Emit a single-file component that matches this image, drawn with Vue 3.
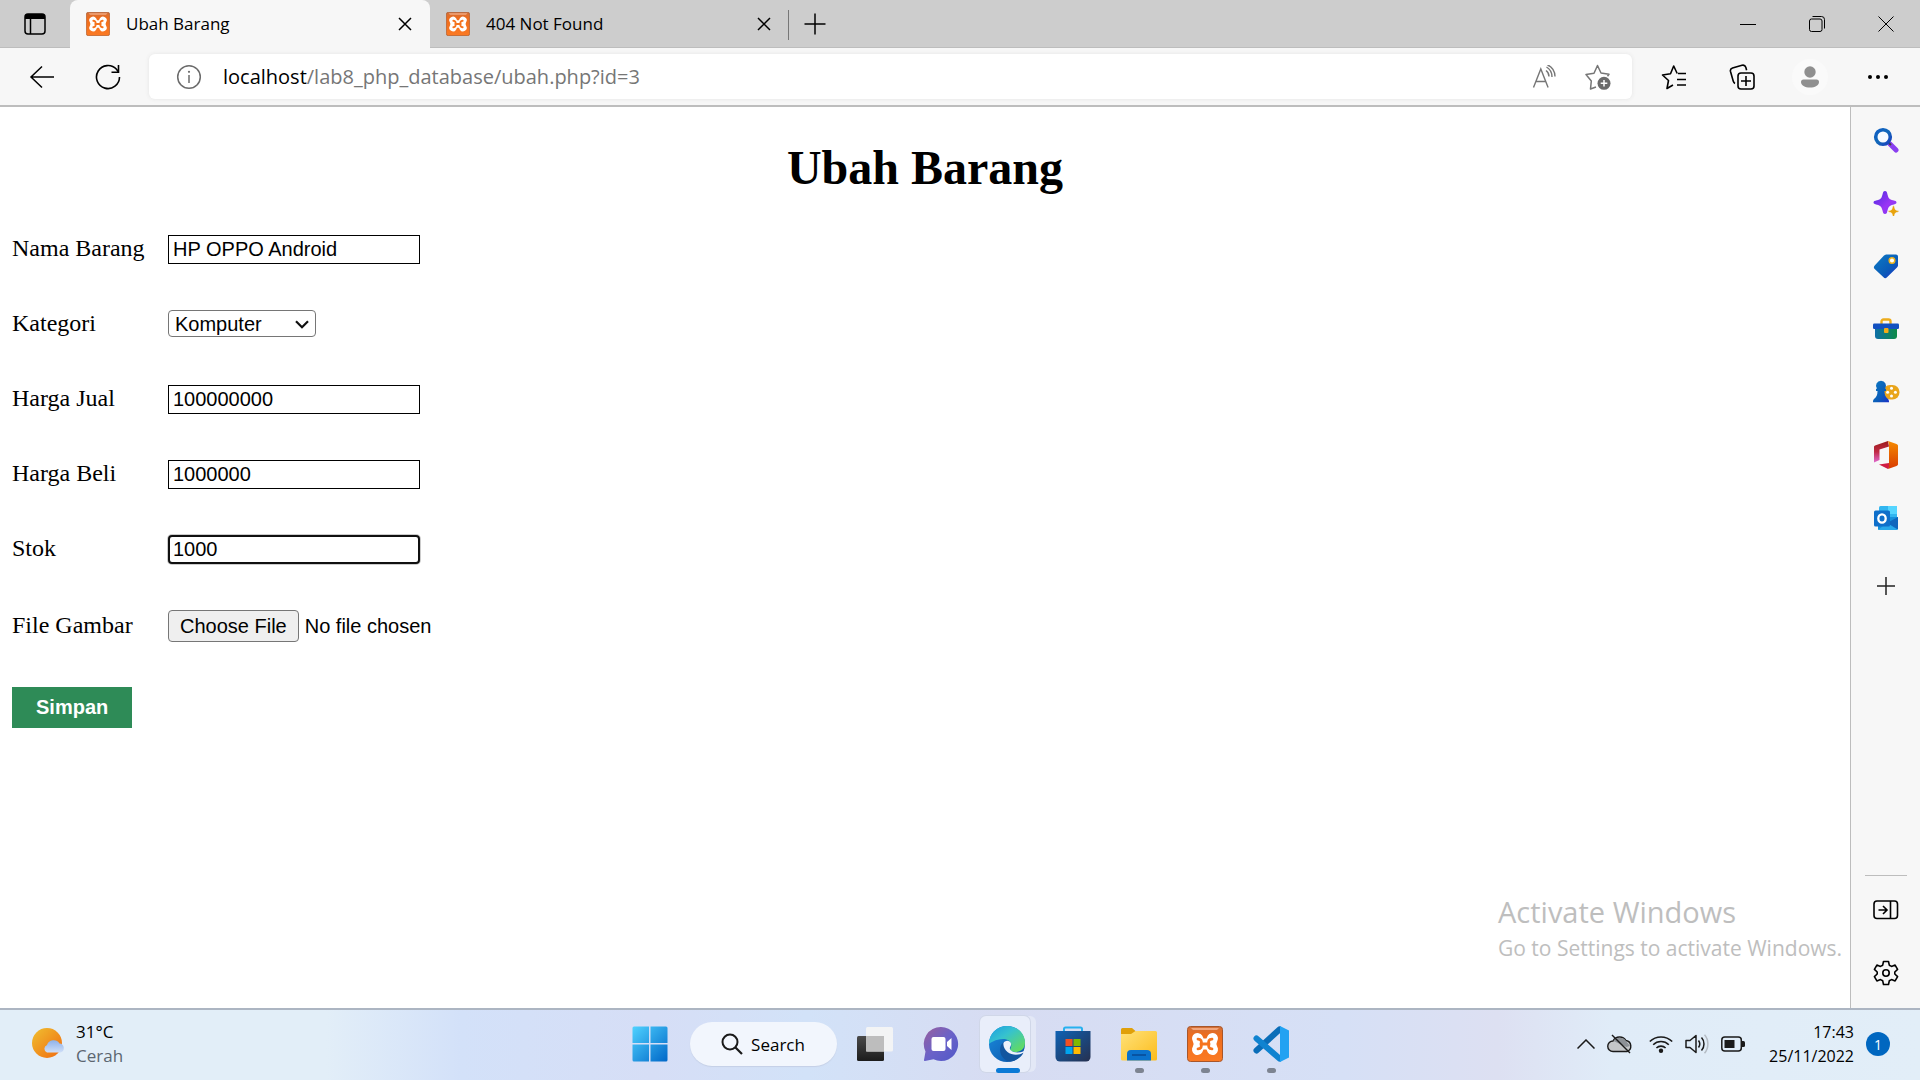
<script setup>
import { ref } from 'vue'

const tabs = [
  { title: 'Ubah Barang', active: true },
  { title: '404 Not Found', active: false },
]
const nama = ref('HP OPPO Android')
const kategori = ref('Komputer')
const jual = ref('100000000')
const beli = ref('1000000')
const stok = ref('1000')
</script>

<template>
  <div class="desktop">
    <svg class="defs" aria-hidden="true">
      <defs>
        <linearGradient id="gOrange" x1="0" y1="0" x2="0" y2="1">
          <stop offset="0" stop-color="#d0703a" /><stop offset=".25" stop-color="#ee6c1c" /><stop offset="1" stop-color="#fb7a24" />
        </linearGradient>
        <linearGradient id="gWin" x1="0" y1="0" x2="1" y2="1">
          <stop offset="0" stop-color="#4fd2ff" /><stop offset="1" stop-color="#0067c8" />
        </linearGradient>
        <linearGradient id="gLens" x1="0" y1="0" x2="1" y2="1">
          <stop offset="0" stop-color="#0f5fc4" /><stop offset=".5" stop-color="#1268b8" /><stop offset="1" stop-color="#1a3fc0" />
        </linearGradient>
        <linearGradient id="gPurple" x1="0" y1="0" x2="1" y2="1">
          <stop offset="0" stop-color="#4a2be0" /><stop offset=".6" stop-color="#9a35f5" /><stop offset="1" stop-color="#7a3cf0" />
        </linearGradient>
        <linearGradient id="gTag" x1="0" y1="0" x2="1" y2="1">
          <stop offset="0" stop-color="#0d7bc4" /><stop offset=".6" stop-color="#0b5cb8" /><stop offset="1" stop-color="#1b30c8" />
        </linearGradient>
        <linearGradient id="gBox" x1="0" y1="0" x2="1" y2="0">
          <stop offset="0" stop-color="#0e6fa8" /><stop offset="1" stop-color="#0d8a45" />
        </linearGradient>
        <linearGradient id="gOffice" x1="0" y1="0" x2="0" y2="1">
          <stop offset="0" stop-color="#f58a00" /><stop offset="1" stop-color="#d83b01" />
        </linearGradient>
        <linearGradient id="gOfficeL" x1="0" y1="0" x2="0" y2="1">
          <stop offset="0" stop-color="#9c1c1c" /><stop offset=".5" stop-color="#c02a44" /><stop offset="1" stop-color="#e06ad0" />
        </linearGradient>
        <linearGradient id="gChat" x1="0" y1="0" x2="1" y2="1">
          <stop offset="0" stop-color="#9a5f9c" /><stop offset=".5" stop-color="#6a62c8" /><stop offset="1" stop-color="#5058c8" />
        </linearGradient>
        <linearGradient id="gEdgeTop" x1="0" y1="0" x2="1" y2="1">
          <stop offset="0" stop-color="#1b9de2" /><stop offset=".4" stop-color="#36c2cf" /><stop offset="1" stop-color="#6be04a" />
        </linearGradient>
        <linearGradient id="gEdgeLow" x1="0" y1="0" x2="1" y2="1">
          <stop offset="0" stop-color="#1b8ee0" /><stop offset="1" stop-color="#0a4fa4" />
        </linearGradient>
        <linearGradient id="gStore" x1="0" y1="0" x2="1" y2="1">
          <stop offset="0" stop-color="#0f62b4" /><stop offset="1" stop-color="#26304f" />
        </linearGradient>
        <linearGradient id="gFolder" x1="0" y1="0" x2="1" y2="1">
          <stop offset="0" stop-color="#ffe27a" /><stop offset="1" stop-color="#fcbc1c" />
        </linearGradient>
        <linearGradient id="gDark" x1="0" y1="0" x2="0" y2="1">
          <stop offset="0" stop-color="#4a4a4a" /><stop offset="1" stop-color="#1c1c1c" />
        </linearGradient>
        <linearGradient id="gSun" x1="0" y1="0" x2="1" y2="1">
          <stop offset="0" stop-color="#f0c030" /><stop offset="1" stop-color="#f06a10" />
        </linearGradient>
        <linearGradient id="gCloud" x1="0" y1="0" x2="0" y2="1">
          <stop offset="0" stop-color="#8fb2ea" /><stop offset="1" stop-color="#cfdff8" />
        </linearGradient>
      </defs>
      <symbol id="xampp" viewBox="0 0 36 36">
        <rect x=".5" y=".5" width="35" height="35" rx="3" fill="url(#gOrange)" stroke="#a8562a" />
        <path d="M4 2h28l-2 2H6z" fill="#f2a67c" />
        <g fill="none" stroke-linecap="round">
          <path d="M10.500 12.500Q14 18 10.500 23.500M25.500 12.500Q22 18 25.500 23.500M12 18h12" stroke="#fff" stroke-width="11" />
          <path d="M11 13.200Q15.500 13.500 14 18Q15.500 22.500 11 22.800M25 13.200Q20.500 13.500 22 18Q20.500 22.500 25 22.800M14 18h8" stroke="#f5741f" stroke-width="2.800" />
        </g>
      </symbol>
      <symbol id="close" viewBox="0 0 14 14"><path d="M1 1l12 12M13 1L1 13" fill="none" stroke="#000" stroke-width="1.500" /></symbol>
    </svg>

    <header class="tabstrip">
      <button class="tabmenu" aria-label="Tab actions">
        <svg width="22" height="22" viewBox="0 0 22 22"><rect x="1" y="1" width="20" height="20" rx="3" fill="none" stroke="#000" stroke-width="1.500" /><path d="M1 6V4a3 3 0 0 1 3-3h14a3 3 0 0 1 3 3v2z" fill="#000" /><path d="M6.500 6v15" stroke="#000" stroke-width="1.500" /></svg>
      </button>
      <div v-for="t in tabs" :key="t.title" class="tab" :class="{ active: t.active }">
        <svg width="24" height="24"><use href="#xampp" /></svg>
        <span class="tabtitle">{{ t.title }}</span>
        <button class="tabclose" aria-label="Close tab"><svg width="14" height="14"><use href="#close" /></svg></button>
      </div>
      <button class="newtab" aria-label="New tab"><svg width="22" height="22" viewBox="0 0 22 22"><path d="M11 .5v21M.5 11h21" stroke="#000" stroke-width="1.500" /></svg></button>
      <div class="wincontrols">
        <button aria-label="Minimize"><svg width="16" height="16" viewBox="0 0 16 16"><path d="M0 8.500h16" stroke="#000" /></svg></button>
        <button aria-label="Restore"><svg width="16" height="16" viewBox="0 0 16 16"><rect x=".5" y="3" width="12.500" height="12.500" rx="2" fill="none" stroke="#000" /><path d="M3.500 .5h9a3 3 0 0 1 3 3v9" fill="none" stroke="#000" /></svg></button>
        <button aria-label="Close"><svg width="16" height="16" viewBox="0 0 16 16"><path d="M.5 .5l15 15M15.500 .5l-15 15" stroke="#000" /></svg></button>
      </div>
    </header>

    <nav class="toolbar">
      <button class="nav" aria-label="Back"><svg width="26" height="24" viewBox="0 0 26 24"><path d="M25 12H2M13 1.500L2 12l11 10.500" fill="none" stroke="#000" stroke-width="1.500" /></svg></button>
      <button class="nav" aria-label="Refresh"><svg width="26" height="26" viewBox="0 0 26 26"><path d="M24.500 13A11.500 11.500 0 1 1 21.500 5.300L23.500 8" fill="none" stroke="#000" stroke-width="1.600" /><path d="M23.500 1v7.200h-7" fill="none" stroke="#000" stroke-width="1.600" /></svg></button>
      <div class="address">
        <svg width="26" height="26" viewBox="0 0 26 26"><circle cx="13" cy="13" r="11.300" fill="none" stroke="#6b6b6b" stroke-width="1.500" /><path d="M13 11v8" stroke="#6b6b6b" stroke-width="1.500" /><circle cx="13" cy="7.800" r="1.100" fill="#6b6b6b" /></svg>
        <span class="url"><b>localhost</b>/lab8_php_database/ubah.php?id=3</span>
        <button class="inbar" aria-label="Read aloud"><svg width="24" height="24" viewBox="0 0 24 24"><path d="M1.500 22.500L8.800 4l7.300 18.500M4 16.500h9.500M14 5.500c2 1.500 3 3.500 3 6M14.500 2c3.500 2 5.500 5.500 5.500 10M15.500 0c4.500 1.500 7.500 6.500 7.500 11.500" fill="none" stroke="#767676" stroke-width="1.400" /></svg></button>
        <button class="inbar" aria-label="Add to favorites"><svg width="26" height="26" viewBox="0 0 26 26"><path d="M11 23l-5.500 2 .8-8L1 10.500l8-1.200L12.500 1.500 16 9l8 1.200-1.500 2" fill="none" stroke="#767676" stroke-width="1.500" stroke-linejoin="round" /><circle cx="19" cy="19.300" r="6.500" fill="#6b6b6b" /><path d="M19 16v6.600M15.700 19.300h6.600" stroke="#fff" stroke-width="1.500" /></svg></button>
      </div>
      <div class="tools">
        <button aria-label="Favorites"><svg width="26" height="26" viewBox="0 0 26 26"><path d="M12 21l-6 3.500 1.500-8L1.500 11l8-1.200L12.700 2l3.500 7.500M17 9.500h8M16 15.500h9M16 21h9" fill="none" stroke="#000" stroke-width="1.600" stroke-linejoin="round" /></svg></button>
        <button aria-label="Collections"><svg width="26" height="26" viewBox="0 0 26 26"><rect x="9" y="9" width="16" height="16" rx="3" fill="none" stroke="#000" stroke-width="1.600" /><path d="M17 12v10M12 17h10" stroke="#000" stroke-width="1.600" /><path d="M6 19.500C5 19 4.500 18 4.200 17L1.500 7.500C1 5.500 2 4.500 3.500 4L13 1.300c2-.5 3.300.5 3.800 2l.8 3" fill="none" stroke="#000" stroke-width="1.600" /></svg></button>
        <button class="profile" aria-label="Profile"><svg width="20" height="22" viewBox="0 0 20 22"><circle cx="10" cy="6" r="5.700" fill="#8f8f8f" /><path d="M1 16a2.500 2.500 0 0 1 2.500-2.500h13A2.500 2.500 0 0 1 19 16c0 3.500-4 5.500-9 5.500S1 19.500 1 16z" fill="#8f8f8f" /></svg></button>
        <button aria-label="Settings and more"><svg width="22" height="6" viewBox="0 0 22 6"><circle cx="3" cy="3" r="2" /><circle cx="11" cy="3" r="2" /><circle cx="19" cy="3" r="2" /></svg></button>
      </div>
    </nav>

    <div class="main">
      <main class="page">
        <h1>Ubah Barang</h1>
        <form @submit.prevent>
          <div class="row"><label for="nama">Nama Barang</label><input id="nama" v-model="nama" class="text" type="text" /></div>
          <div class="row">
            <label for="kategori">Kategori</label>
            <span class="selectwrap">
              <select id="kategori" v-model="kategori"><option>Komputer</option><option>Elektronik</option><option>Hand Phone</option></select>
              <svg class="arrow" width="14" height="9" viewBox="0 0 14 9"><path d="M1 1.200l6 6 6-6" fill="none" stroke="#101010" stroke-width="2.200" /></svg>
            </span>
          </div>
          <div class="row"><label for="jual">Harga Jual</label><input id="jual" v-model="jual" class="text" type="text" /></div>
          <div class="row"><label for="beli">Harga Beli</label><input id="beli" v-model="beli" class="text" type="text" /></div>
          <div class="row"><label for="stok">Stok</label><input id="stok" v-model="stok" class="text focused" type="text" /></div>
          <div class="row"><label for="gambar">File Gambar</label><input id="gambar" class="file" type="file" /></div>
          <button class="submit" type="submit">Simpan</button>
        </form>
        <div class="watermark">
          <div class="wm1">Activate Windows</div>
          <div class="wm2">Go to Settings to activate Windows.</div>
        </div>
      </main>

      <aside class="sidebar">
        <button aria-label="Search"><svg width="26" height="26" viewBox="0 0 26 26"><path d="M17 17l6 6" stroke="#8a3ff0" stroke-width="5" stroke-linecap="round" /><path d="M15 15l3 3" stroke="#444" stroke-width="2" /><circle cx="10" cy="10" r="7.300" fill="#f7fbff" stroke="url(#gLens)" stroke-width="3.600" /></svg></button>
        <button aria-label="Discover"><svg width="26" height="26" viewBox="0 0 26 26"><path d="M12 1c1.500 0 2 1 2.500 3.500C15.500 8.500 16.500 9.500 20 10.300c2.500.5 3.500 1 3.500 2.200s-1 1.700-3.500 2.200c-3.500.8-4.500 1.800-5.500 5.800C14 23 13.500 24 12 24s-2-1-2.500-3.500c-1-4-2-5-5.500-5.800C1.500 14.200.5 13.700.5 12.500s1-1.700 3.500-2.200c3.500-.8 4.500-1.800 5.500-5.800C10 2 10.500 1 12 1z" fill="url(#gPurple)" /><path d="M20.500 15.500c1 0 1.200 3.500 2 4.200s3.500.8 3.500 1.600-2.700 1-3.500 1.700-1 4-2 4-1.200-3.300-2-4-3.500-.9-3.500-1.700 2.700-.9 3.500-1.600 1-4.200 2-4.200z" fill="#e8a30c" stroke="#f7f7f7" stroke-width=".6" /></svg></button>
        <button aria-label="Shopping"><svg width="26" height="26" viewBox="0 0 26 26"><path d="M13 1.500h10A2 2 0 0 1 25 3.500v9a3 3 0 0 1-1 2L14 24.300a2.500 2.500 0 0 1-3.500 0L1.700 16a2.500 2.500 0 0 1 0-3.500L11 2.500z" fill="url(#gTag)" /><circle cx="19" cy="7.500" r="2.800" fill="#fff" stroke="#edb21c" stroke-width="1.500" /></svg></button>
        <button aria-label="Tools"><svg width="26" height="22" viewBox="0 0 26 22"><path d="M8.500 6V3.500A2 2 0 0 1 10.500 1.500h5a2 2 0 0 1 2 2V6" fill="none" stroke="#edac1c" stroke-width="2.400" /><path d="M2 9h22v9a3 3 0 0 1-3 3H5a3 3 0 0 1-3-3z" fill="url(#gBox)" /><rect x="0" y="5.500" width="26" height="5.500" rx="1.200" fill="#1250c0" /><rect x="11" y="10" width="4.500" height="5" rx="1" fill="#f3ab17" /></svg></button>
        <button aria-label="Games"><svg width="28" height="24" viewBox="0 0 28 24"><rect x="11" y="5" width="16.500" height="14.500" rx="7" fill="#e9a51b" /><g fill="#fff"><circle cx="19.500" cy="8.300" r="1.500" /><circle cx="19.500" cy="16" r="1.500" /><circle cx="15.600" cy="12.200" r="1.500" /><circle cx="23.400" cy="12.200" r="1.500" /></g><path d="M9 .8a5 5 0 0 1 4 8h1v2.300h-1.500c0 4 1 6 3.500 8 1 1 1 2.400 1 3.200H1c0-1 0-2.500 1-3.200 2.500-2 3.500-4 3.500-8H4V8.800h1a5 5 0 0 1 4-8z" fill="url(#gTag)" /></svg></button>
        <button aria-label="Office"><svg width="26" height="30" viewBox="0 0 26 30"><path d="M15 1L2 5.500C1 6 1 6.500 1 7.500v15l5.500-2.500V9.500L16 6.500z" fill="url(#gOfficeL)" /><path d="M6 24.500L15 29l2-3-1-3z" fill="#d01d43" /><path d="M15 1l8.500 3C24.500 4.500 25 5 25 6v18c0 1-.5 1.500-1.500 2L15 29l1-2V4z" fill="url(#gOffice)" /></svg></button>
        <button aria-label="Outlook"><svg width="26" height="26" viewBox="0 0 26 26"><rect x="6" y="1" width="18" height="15" rx="1.500" fill="#32b6f0" /><path d="M15 1h9v8h-9z" fill="#55d5ff" /><path d="M5 12h20v11a2 2 0 0 1-2 2H6a1 1 0 0 1-1-1z" fill="#1590dc" /><path d="M25 12v12.500L14 18z" fill="#1166bd" /><path d="M5 25l20 0-11-7z" fill="#28a8ea" /><rect x="1" y="5.500" width="16" height="16" rx="1.500" fill="#0f6fca" /><ellipse cx="9" cy="13.500" rx="3.700" ry="4.200" fill="none" stroke="#fff" stroke-width="2.300" /></svg></button>
        <button class="add" aria-label="Add"><svg width="18" height="18" viewBox="0 0 18 18"><path d="M9 0v18M0 9h18" stroke="#222" stroke-width="1.500" /></svg></button>
        <div class="sidebottom">
          <button aria-label="Hide sidebar"><svg width="26" height="20" viewBox="0 0 26 20"><rect x="1" y="1" width="23.500" height="17.500" rx="3" fill="none" stroke="#000" stroke-width="1.600" /><path d="M17.500 1v17.500M5.500 10h8M10 6l4 4-4 4" fill="none" stroke="#000" stroke-width="1.600" /></svg></button>
          <button aria-label="Settings"><svg width="26" height="26" viewBox="0 0 26 26"><path d="M10.500 1.500h5l.8 3.700 2.200 1.200 3.600-1.300 2.500 4.300-2.800 2.600v2l2.800 2.600-2.500 4.300-3.600-1.300-2.200 1.200-.8 3.700h-5l-.8-3.700-2.200-1.200-3.600 1.300-2.500-4.300L4.200 14v-2L1.400 9.400l2.500-4.300 3.600 1.300 2.200-1.200z" fill="none" stroke="#000" stroke-width="1.600" stroke-linejoin="round" /><circle cx="13" cy="13" r="3.200" fill="none" stroke="#000" stroke-width="1.600" /></svg></button>
        </div>
      </aside>
    </div>

    <footer class="taskbar">
      <div class="weather">
        <svg width="34" height="32" viewBox="0 0 34 32"><circle cx="15" cy="15" r="15" fill="url(#gSun)" /><path d="M15 24.500a4 4 0 0 1 0-7.500 7 7 0 0 1 12.500-1.500 4.600 4.600 0 0 1 1 9z" fill="url(#gCloud)" /></svg>
        <div><div class="temp">31°C</div><div class="cond">Cerah</div></div>
      </div>
      <div class="apps">
        <button class="app" aria-label="Start"><svg width="36" height="36" viewBox="0 0 36 36"><path d="M2 .5h15v16.500H.5V2A1.500 1.500 0 0 1 2 .5zM18.500 .5H34A1.500 1.500 0 0 1 35.500 2v15h-17zM.5 18.500H17v17H2A1.500 1.500 0 0 1 .5 34zM18.500 18.500h17V34a1.500 1.500 0 0 1-1.500 1.500H18.500z" fill="url(#gWin)" /></svg></button>
        <button class="search"><svg width="22" height="22" viewBox="0 0 22 22"><circle cx="9" cy="9" r="7.500" fill="none" stroke="#1a1a1a" stroke-width="2" /><path d="M14.500 14.500l6.500 6.500" stroke="#1a1a1a" stroke-width="2.200" /></svg><span>Search</span></button>
        <button class="app" aria-label="Task view"><svg width="36" height="36" viewBox="0 0 36 36"><rect x="0" y="10" width="27" height="25" rx="1.500" fill="url(#gDark)" /><rect x="9" y="1" width="27" height="24.500" rx="1.500" fill="#f4f4f4" fill-opacity=".95" /><path d="M9 10h18v15.500H9z" fill="#bdbdbd" /></svg></button>
        <button class="app" aria-label="Chat"><svg width="36" height="36" viewBox="0 0 36 36"><path d="M18 1a17 17 0 1 1-7.500 32.200L2 35c-1 0-1-.5-1-1l1.500-8.500A17 17 0 0 1 18 1z" fill="url(#gChat)" /><rect x="8.500" y="11" width="14" height="14" rx="2" fill="#fff" /><path d="M24 16l4.500-4V24L24 20z" fill="#fff" /></svg></button>
        <button class="app running focus" aria-label="Edge"><svg width="36" height="36" viewBox="0 0 36 36"><circle cx="18" cy="18" r="18" fill="url(#gEdgeLow)" /><path d="M0 18C0 7 8.500 0 18 0c10.500 0 18 7.500 18 16.500 0 6.500-4.500 9.500-9.500 9.500-4 0-6-1.500-5-3.500 2.500-5-1-9.500-7.500-9.500C6.500 13 1 17 0 18z" fill="url(#gEdgeTop)" /><path d="M12 19c-3 8 2 15.500 9 16.600C28 35 33 30 34.500 26.500c-6 3-14 1.500-18-3.500-2-2.500-2.500-5-1-8z" fill="#12559f" /><path d="M14.500 17c1-3 6.500-3.500 7.500.5.500 3-2.500 4-.5 6.500 3 3 8.500 3 12.500 1.500 1-.5 1 .500.500 1-5 3.500-12 2.500-16-.5-3-2.500-4.500-6-4-9z" fill="#edf1fb" /></svg></button>
        <button class="app" aria-label="Store"><svg width="36" height="36" viewBox="0 0 36 36"><path d="M9 7V3a1.500 1.500 0 0 1 1.500-1.500h15A1.500 1.500 0 0 1 27 3v4" fill="none" stroke="#27b1ef" stroke-width="2" /><path d="M.5 5h35v26a4.500 4.500 0 0 1-4.500 4.500H5A4.500 4.500 0 0 1 .5 31z" fill="url(#gStore)" /><path d="M10.500 13h7v7h-7z" fill="#f25022" /><path d="M18.500 13h7v7h-7z" fill="#7fba00" /><path d="M10.500 21h7v7h-7z" fill="#00a4ef" /><path d="M18.500 21h7v7h-7z" fill="#ffb900" /></svg></button>
        <button class="app running" aria-label="File Explorer"><svg width="36" height="36" viewBox="0 0 36 36"><path d="M0 3.500A1.500 1.500 0 0 1 1.500 2H11l4 3.500V10H0z" fill="#e0a00a" /><path d="M0 8h10l4.500-3H34.500A1.500 1.500 0 0 1 36 6.500V33a1.500 1.500 0 0 1-1.500 1.500h-33A1.500 1.500 0 0 1 0 33z" fill="url(#gFolder)" /><path d="M6 34.500V28a4 4 0 0 1 4-4h16a4 4 0 0 1 4 4v6.500z" fill="#0b72cc" /><path d="M11 29h14" stroke="#084a94" stroke-width="1.500" /></svg></button>
        <button class="app running" aria-label="XAMPP"><svg width="36" height="36"><use href="#xampp" /></svg></button>
        <button class="app running" aria-label="Visual Studio Code"><svg width="36" height="36" viewBox="0 0 36 36"><path d="M3.500 24.500L26.500 3.500" stroke="#0a6db8" stroke-width="6" stroke-linecap="round" /><path d="M3.500 12.500l23 20" stroke="#1083d0" stroke-width="6" stroke-linecap="round" /><path d="M27 0l9 4.500v27L27 36z" fill="#22a2f2" /></svg></button>
      </div>
      <div class="tray">
        <svg width="18" height="10" viewBox="0 0 18 10"><path d="M.5 9.500L9 1l8.500 8.500" fill="none" stroke="#1a1a1a" stroke-width="1.500" /></svg>
        <svg class="cloud" width="26" height="20" viewBox="0 0 26 20"><path d="M6 17.500a5 5 0 0 1 0-10.500 7.500 7.500 0 0 1 13-.5 5.700 5.700 0 0 1 1 11z" fill="#c4c6c8" stroke="#1a1a1a" stroke-width="1.400" /><path d="M6.500 7a7.500 7.500 0 0 1 12.500 0l4 5-3.500 1z" fill="#8d9196" /><path d="M5 1l18 18" stroke="#1a1a1a" stroke-width="1.500" /></svg>
        <svg width="24" height="18" viewBox="0 0 24 18"><path d="M.8 6.500a16 16 0 0 1 22.400 0M4.200 9.800a11 11 0 0 1 15.600 0M7.400 13a6.500 6.500 0 0 1 9.200 0" fill="none" stroke="#1a1a1a" stroke-width="1.600" /><circle cx="12" cy="15.800" r="2.200" fill="#1a1a1a" /></svg>
        <svg width="24" height="20" viewBox="0 0 24 20"><path d="M1 6.500h4L11 1.500v17L5 13.500H1z" fill="none" stroke="#1a1a1a" stroke-width="1.500" stroke-linejoin="round" /><path d="M13.500 6.500c1.500 2 1.500 5 0 7M16.500 3.500c3.300 3.500 3.300 9.500 0 13" fill="none" stroke="#1a1a1a" stroke-width="1.500" /><path d="M19.500 .8c4.500 5 4.500 13.400 0 18.400" fill="none" stroke="#b5bcc4" stroke-width="1.500" /></svg>
        <svg width="24" height="16" viewBox="0 0 24 16"><rect x=".8" y="1" width="19.500" height="14" rx="3" fill="none" stroke="#1a1a1a" stroke-width="1.500" /><rect x="3.500" y="4" width="10" height="8" fill="#1a1a1a" /><path d="M21 5h1.500a1.500 1.500 0 0 1 1.500 1.500v3a1.500 1.500 0 0 1-1.500 1.500H21z" fill="#1a1a1a" /></svg>
        <div class="clock"><div>17:43</div><div>25/11/2022</div></div>
        <span class="badge">1</span>
      </div>
    </footer>
  </div>
</template>

<style>
body { margin: 0; }
</style>

<style scoped>
.desktop { display: flex; flex-direction: column; min-height: 100vh; font-family: "Open Sans", "Noto Sans", sans-serif; color: #000; background: #f7f7f7; }
.defs { position: absolute; width: 0; height: 0; }
svg { display: block; flex: none; }
button { border: 0; padding: 0; margin: 0; background: none; font: inherit; color: inherit; display: flex; align-items: center; justify-content: center; }

.tabstrip { display: flex; height: 48px; background: #cdcdcd; box-shadow: inset 0 -1px #bdbdbd; }
.tabmenu { width: 70px; }
.tab { box-sizing: border-box; display: flex; align-items: center; width: 360px; padding: 0 16px; font-size: 17px; }
.tab:not(.active) { position: relative; width: 359px; }
.tab:not(.active)::after { content: ""; position: absolute; right: 0; top: 10px; width: 1px; height: 30px; background: #777; }
.tab.active { background: #f7f7f7; border-radius: 8px 8px 0 0; }
.tabtitle { flex: 1; margin-left: 16px; padding-bottom: 2px; }
.tabclose { width: 18px; }
.newtab { width: 52px; }
.wincontrols { display: flex; margin-left: auto; }
.wincontrols button { width: 69px; }

.toolbar { display: flex; align-items: center; height: 57px; padding: 0 8px 0 9px; border-bottom: 2px solid #bdbdbd; }
.nav { width: 66px; height: 48px; }
.address { flex: 1; display: flex; align-items: center; height: 45px; margin-left: 8px; padding: 0 16px 0 27px; background: #fff; border-radius: 6px; box-shadow: 0 0 4px #e4e4e4; }
.url { flex: 1; margin-left: 21px; font-size: 20px; color: #767676; }
.url b { font-weight: 400; color: #000; }
.inbar { width: 36px; height: 40px; margin-left: 18px; }
.tools { display: flex; align-items: center; padding-left: 8px; }
.tools button { width: 68px; height: 40px; }
.tools .profile { width: 36px; height: 36px; margin: 0 16px; border-radius: 50%; background: #fafafa; }

.main { flex: 1; display: flex; }
.page { flex: 1; display: flex; flex-direction: column; padding: 33px 12px 0; background: #fff; border-right: 1px solid #bdbdbd; font-family: "Liberation Serif", serif; font-size: 24px; }
h1 { margin: 0 0 31px; font-size: 48px; line-height: 55px; text-align: center; }
form { display: flex; flex-direction: column; align-items: flex-start; gap: 28px; }
.row { display: flex; align-items: baseline; box-sizing: border-box; min-height: 47px; padding: 9px 0; line-height: 24px; }
label { width: 156px; }
.text, select, .file { font: 20px "Liberation Sans", sans-serif; color: #000; }
.text { box-sizing: border-box; width: 252px; height: 29px; margin: 0; padding: 0 4px; border: 1px solid #000; outline: 0; }
.text.focused { border: 2px solid #101010; border-radius: 4px; padding: 0 3px; box-shadow: 0 0 0 1px #ccc; }
.selectwrap { display: flex; position: relative; }
select { appearance: none; box-sizing: border-box; width: 148px; height: 27px; margin: 0; padding: 0 6px; border: 1px solid #767676; border-radius: 4px; background: #fff; }
.arrow { position: absolute; right: 7px; top: 10px; }
.file { width: 340px; line-height: 24px; }
.file::file-selector-button { box-sizing: border-box; height: 32px; margin: 0 6px 0 0; padding: 0 11px; border: 1px solid #767676; border-radius: 4px; background: #efefef; font: inherit; color: #000; }
.submit { height: 41px; margin-top: 8px; padding: 0 24px; background: #2e8b57; color: #fff; font: bold 20px "Liberation Sans", sans-serif; }
.watermark { margin-top: auto; align-self: flex-end; width: 340px; padding-bottom: 44px; color: #bebebe; font-family: "Open Sans", sans-serif; white-space: nowrap; }
.wm1 { font-size: 29px; line-height: 40px; }
.wm2 { font-size: 21px; line-height: 32px; }

.sidebar { display: flex; flex-direction: column; width: 69px; padding: 1px 0 4px; }
.sidebar button { width: 69px; height: 63px; }
.sidebar .add { height: 74px; }
.sidebottom { margin-top: auto; padding-top: 3px; position: relative; }
.sidebottom::before { content: ""; position: absolute; top: 0; left: 14px; right: 13px; height: 1px; background: #bdbdbd; }

.taskbar { box-sizing: border-box; display: grid; grid-template-columns: 1fr auto 1fr; align-items: center; height: 72px; padding-bottom: 2px; border-top: 2px solid #acb5c2; background: linear-gradient(90deg, #e2eef8 0%, #e2eef8 17%, #d3e1f9 24%, #d6def6 34%, #d2e2f8 42%, #d7dcf2 52%, #d6e0f6 70%, #dde0f2 78%, #e0ecf8 84%, #e2eef8 100%); }
.weather { display: flex; align-items: center; gap: 10px; padding-left: 32px; font-size: 17px; line-height: 24px; }
.cond { color: #5c6670; }
.apps { display: flex; align-items: center; }
.app { position: relative; width: 66px; height: 68px; }
.app svg { position: relative; }
.app.running::after { content: ""; position: absolute; bottom: 5px; left: 29px; width: 9px; height: 5px; border-radius: 3px; background: #7d8491; }
.app.focus::before { content: ""; position: absolute; top: 6px; left: 6px; width: 50px; height: 56px; border-radius: 6px; background: #e9eefa; box-shadow: 0 0 0 1px #d0d7e8, 6px 0 0 #e3e8f6; }
.app.running.focus::after { left: 22px; width: 24px; background: #0b7ad6; }
.search { gap: 8px; width: 147px; height: 44px; margin: 0 5px 0 7px; border-radius: 22px; background: #f2f6fd; box-shadow: 0 1px 1px #c5d0e6; font-size: 17px; }
.tray { display: flex; align-items: center; justify-content: flex-end; gap: 12px; padding-right: 30px; }
.cloud { margin-right: 4px; }
.clock { margin-left: 12px; text-align: right; font-size: 16px; line-height: 24px; }
.badge { display: grid; place-items: center; width: 24px; height: 24px; border-radius: 50%; background: #0067c0; color: #fff; font-size: 14px; }
</style>
